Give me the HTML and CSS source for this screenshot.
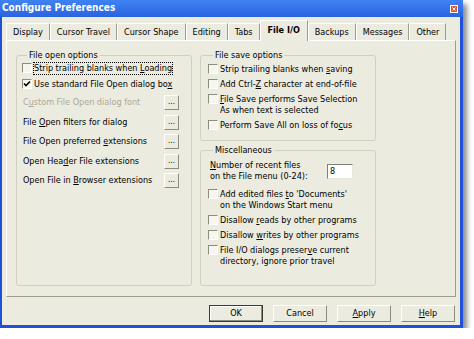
FILE: index.html
```html
<!DOCTYPE html>
<html>
<head>
<meta charset="utf-8">
<link rel="stylesheet" href="styles.css">
</head>
<body>
<div class="window">
  <div class="titlebar">
    <span class="title">Configure Preferences</span>
    <span class="close"><svg width="8" height="8" viewBox="0 0 8 8"><path d="M2 2 L6 6 M6 2 L2 6" stroke="#fff" stroke-width="1.3"/></svg></span>
  </div>
  <div class="client">
    <div class="tabs">
      <span class="tab">Display</span>
      <span class="tab">Cursor Travel</span>
      <span class="tab">Cursor Shape</span>
      <span class="tab">Editing</span>
      <span class="tab">Tabs</span>
      <span class="tab active">File I/O</span>
      <span class="tab">Backups</span>
      <span class="tab">Messages</span>
      <span class="tab">Other</span>
    </div>
    <div class="page">
      <fieldset class="group g-open">
        <legend>File open options</legend>
        <div class="check"><span class="box"></span><span class="focus">Strip trailing blanks when <u>L</u>oading</span></div>
        <div class="check"><span class="box"><svg width="8" height="8" viewBox="0 0 8 8"><path d="M1 3.5 L3 5.5 L7 1.5" fill="none" stroke="#000" stroke-width="1.6"/></svg></span><span>Use standard File Open dialog bo<u>x</u></span></div>
        <div class="brow disabled"><span>C<u>u</u>stom File Open dialog font</span><span class="dots">...</span></div>
        <div class="brow"><span>File <u>O</u>pen filters for dialog</span><span class="dots">...</span></div>
        <div class="brow"><span>File Open preferred <u>e</u>xtensions</span><span class="dots">...</span></div>
        <div class="brow"><span>Open Hea<u>d</u>er File extensions</span><span class="dots">...</span></div>
        <div class="brow"><span>Open File in <u>B</u>rowser extensions</span><span class="dots">...</span></div>
      </fieldset>
      <div class="rcol">
        <fieldset class="group g-save">
          <legend>File save options</legend>
          <div class="check"><span class="box"></span><span>Strip trailing blanks when <u>s</u>aving</span></div>
          <div class="check"><span class="box"></span><span>Add Ctrl-<u>Z</u> character at end-of-file</span></div>
          <div class="check"><span class="box"></span><span><u>F</u>ile Save performs Save Selection<br>As when text is selected</span></div>
          <div class="check"><span class="box"></span><span>Perform Save All on loss of fo<u>c</u>us</span></div>
        </fieldset>
        <fieldset class="group g-misc">
          <legend>Miscellaneous</legend>
          <div class="numrow"><span><u>N</u>umber of recent files<br>on the File menu (0-24):</span><span class="input">8</span></div>
          <div class="check"><span class="box"></span><span>Add edited files <u>t</u>o 'Documents'<br>on the Windows Start menu</span></div>
          <div class="check"><span class="box"></span><span>Disallow <u>r</u>eads by other programs</span></div>
          <div class="check"><span class="box"></span><span>Disallow <u>w</u>rites by other programs</span></div>
          <div class="check"><span class="box"></span><span>File I/O dialogs preser<u>v</u>e current<br>directory, ignore prior travel</span></div>
        </fieldset>
      </div>
    </div>
    <div class="buttons">
      <span class="btn default">OK</span>
      <span class="btn">Cancel</span>
      <span class="btn"><u>A</u>pply</span>
      <span class="btn"><u>H</u>elp</span>
    </div>
  </div>
</div>
</body>
</html>
```
FILE: styles.css
```css
html, body {
  margin: 0;
  padding: 0;
  background: #ffffff;
}
body {
  font-family: "DejaVu Sans", Verdana, sans-serif;
  font-stretch: condensed;
  font-size: 9px;
  color: #000;
}
.window {
  width: 463px;
  height: 328px;
  box-sizing: border-box;
  padding: 0 3px 3px 2px;
  background: #2150d8;
  display: flex;
  flex-direction: column;
  box-shadow: 4px 4px 5px rgba(0, 0, 0, 0.45);
}
.titlebar {
  height: 15px;
  display: flex;
  align-items: center;
  justify-content: space-between;
  background: linear-gradient(#3f82f2, #2a63e0);
  margin: 0 -3px 0 -2px;
  padding: 0 3px 2px 2px;
}
.title {
  color: #fff;
  font-weight: bold;
  font-size: 10px;
  line-height: 11px;
}
.close {
  width: 8px;
  height: 8px;
  background: #e0542e;
  border: 1px solid #fff;
  box-sizing: border-box;
  display: flex;
  margin-top: 2px;
  margin-right: 2px;
}
.close svg {
  width: 6px;
  height: 6px;
}
.client {
  flex: 1;
  background: #ecebdf;
  display: flex;
  flex-direction: column;
  padding: 4px 4px 0 4px;
}
.tabs {
  display: flex;
  align-items: flex-end;
  height: 19px;
  position: relative;
  z-index: 1;
}
.tab {
  height: 17px;
  line-height: 17px;
  padding: 0 6px;
  border-left: 1px solid #fff;
  border-top: 1px solid #fff;
  border-right: 1px solid #9d9d8e;
  box-sizing: border-box;
  white-space: nowrap;
}
.tab.active {
  height: 21px;
  margin-bottom: -1px;
  font-weight: bold;
  background: #ecebdf;
  padding: 0 7px;
  line-height: 19px;
}
.page {
  height: 257px;
  box-sizing: border-box;
  border-left: 1px solid #fff;
  border-top: 1px solid #fff;
  border-right: 1px solid #9d9d8e;
  border-bottom: 1px solid #9d9d8e;
  display: grid;
  grid-template-columns: 176px 176px;
  column-gap: 8px;
  padding: 9px 0 10px 9px;
}
.rcol {
  display: flex;
  flex-direction: column;
  gap: 4px;
}
.group {
  margin: 0;
  min-width: 0;
  border: 1px solid #d0d0bf;
  border-radius: 3px;
  padding: 0 0 4px 5px;
  line-height: 11px;
}
.group legend {
  padding: 0 2px;
  margin-left: 5px;
  line-height: 11px;
}
.g-save, .g-misc {
  padding-left: 7px;
}
.g-misc {
  flex: 1;
}
.check {
  display: flex;
  align-items: flex-start;
  padding: 2px 0 3px;
}
.g-save .check, .g-misc .check {
  padding: 2px 0 2px;
}
.g-save {
  padding-top: 1px;
  padding-bottom: 7px;
}
.box {
  width: 10px;
  height: 10px;
  box-sizing: border-box;
  border-top: 1px solid #8c8c7f;
  border-left: 1px solid #8c8c7f;
  border-right: 1px solid #fff;
  border-bottom: 1px solid #fff;
  background: #f6f6f0;
  margin-right: 2px;
  flex: none;
  display: flex;
  align-items: center;
  justify-content: center;
}
.focus {
  outline: 1px dotted #000;
  outline-offset: 0;
}
.brow {
  display: flex;
  align-items: center;
  justify-content: space-between;
  height: 19.5px;
  padding: 0 12px 0 1px;
}
.brow.disabled {
  color: #aca899;
}
.dots {
  width: 15px;
  height: 15px;
  box-sizing: border-box;
  border-top: 1px solid #fff;
  border-left: 1px solid #fff;
  border-right: 1px solid #8c8c7f;
  border-bottom: 1px solid #8c8c7f;
  color: #000;
  font-size: 8px;
  line-height: 11px;
  text-align: center;
}
.numrow {
  display: flex;
  align-items: center;
  padding: 4px 0 5px 2px;
}
.input {
  margin-left: auto;
  margin-right: 22px;
  width: 26px;
  height: 15px;
  box-sizing: border-box;
  border-top: 1px solid #7f7f73;
  border-left: 1px solid #7f7f73;
  border-right: 1px solid #e6e6dc;
  border-bottom: 1px solid #e6e6dc;
  background: #fff;
  padding: 1px 2px;
  line-height: 11px;
}
.buttons {
  display: flex;
  justify-content: flex-end;
  gap: 10px;
  padding: 8px 1px 0 0;
}
.btn {
  width: 54px;
  height: 17px;
  box-sizing: border-box;
  border-top: 1px solid #fff;
  border-left: 1px solid #fff;
  border-right: 1px solid #8c8c7f;
  border-bottom: 1px solid #8c8c7f;
  text-align: center;
  line-height: 15px;
}
.btn.default {
  border: 1px solid #3a3a32;
  box-shadow: inset -1px -1px 0 #8c8c7f, inset 1px 1px 0 #fff;
}
```
